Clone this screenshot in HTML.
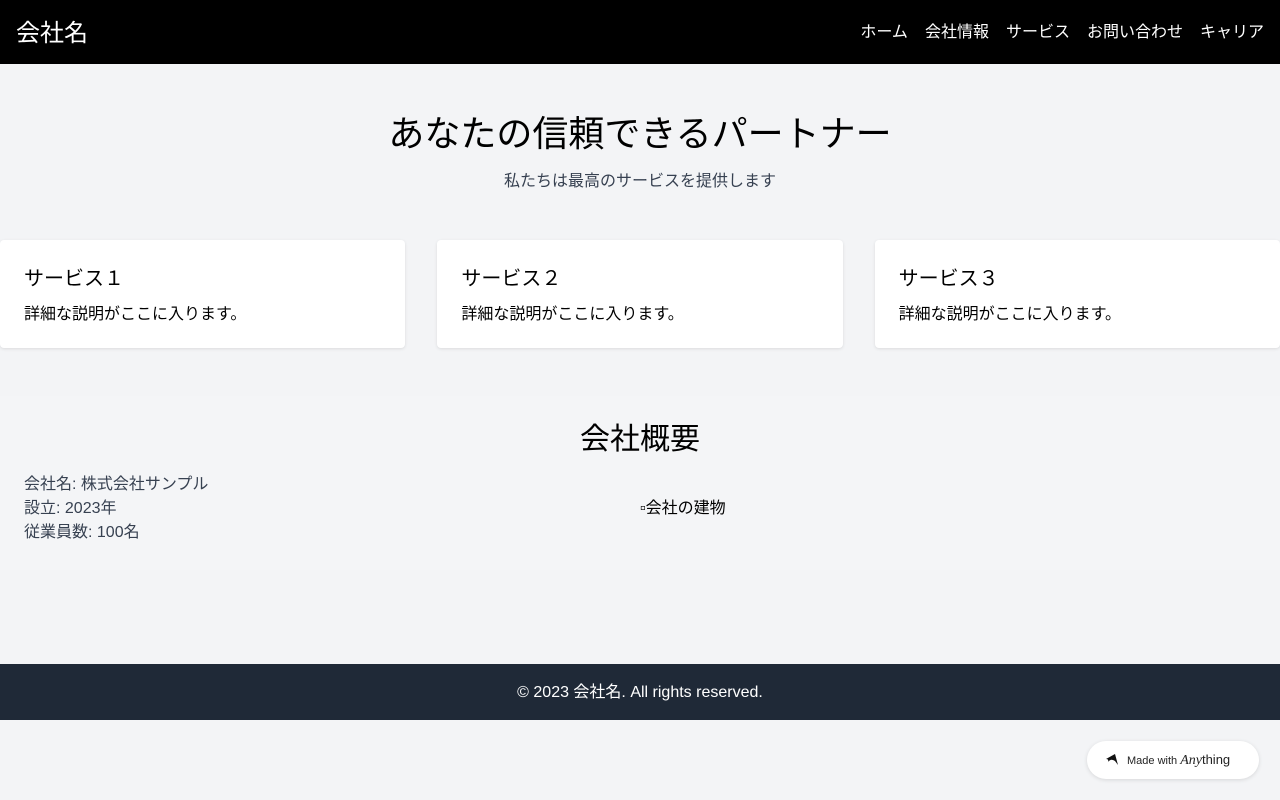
<!DOCTYPE html>
<html><head><meta charset="utf-8"><style>
*{box-sizing:border-box;margin:0;padding:0}
body{width:1280px;height:800px;background:#f3f4f6;font-family:"Liberation Sans","Noto Sans CJK JP",sans-serif;color:#000;position:relative;overflow:hidden}
header{height:64px;background:#000;color:#fff;display:flex;align-items:center;justify-content:space-between;padding:0 16px 4px}
header .logo{font-size:24px}
header nav{display:flex;gap:17px;font-size:16px}
.hero{text-align:center;height:240px;position:absolute;top:0;left:0;right:0}
.hero h1{font-size:36px;font-weight:400;line-height:48px;position:absolute;top:110px;width:100%}
.hero p{font-size:16px;color:#374151;position:absolute;top:167px;width:100%}
.cards{position:absolute;top:240px;left:0;right:0;display:grid;grid-template-columns:repeat(3,1fr);gap:32px}
.card{background:#fff;border-radius:4px;height:108px;padding:24px;box-shadow:0 1px 3px rgba(0,0,0,.1)}
.card h3{font-size:20px;font-weight:400;line-height:28px;margin-bottom:12px;margin-top:1px}
.card p{font-size:16px;line-height:20px}
.about{position:absolute;top:396px;left:0;right:0;height:174px;background:#f4f5f7;padding:26px 24px}
.about h2{font-size:30px;font-weight:400;text-align:center;line-height:36px}
.about .txt{position:absolute;top:77px;left:24px;color:#374151;font-size:16px;line-height:24px}
.about .img{position:absolute;top:101px;left:640px;font-size:16px;line-height:24px}
footer{position:absolute;top:664px;left:0;right:0;height:56px;background:#1f2937;color:#fff;text-align:center;line-height:58px;font-size:16px}
.badge{position:absolute;left:1087px;top:741px;width:172px;height:38px;background:#fff;border-radius:19px;box-shadow:0 1px 4px rgba(0,0,0,.12);display:flex;align-items:center;padding-left:18px;font-size:11px;color:#222;gap:8px}
</style></head><body>
<header><div class="logo">会社名</div><nav><span>ホーム</span><span>会社情報</span><span>サービス</span><span>お問い合わせ</span><span>キャリア</span></nav></header>
<div class="hero"><h1>あなたの信頼できるパートナー</h1><p>私たちは最高のサービスを提供します</p></div>
<div class="cards">
<div class="card"><h3>サービス１</h3><p>詳細な説明がここに入ります。</p></div>
<div class="card"><h3>サービス２</h3><p>詳細な説明がここに入ります。</p></div>
<div class="card"><h3>サービス３</h3><p>詳細な説明がここに入ります。</p></div>
</div>
<div class="about"><h2>会社概要</h2><div class="txt">会社名: 株式会社サンプル<br>設立: 2023年<br>従業員数: 100名</div><div class="img">▫会社の建物</div></div>
<footer>© 2023 会社名. All rights reserved.</footer>
<div class="badge"><svg width="14" height="12" viewBox="0 0 14 12"><path d="M1 5 L10 0 L13 11 L10 7 Q6 4 3 8 Q4 5 1 5Z" fill="#111"/></svg><span>Made with <i style="font-family:'Liberation Serif',serif;font-size:14px">Any</i><span style="font-size:13px">thing</span></span></div>
</body></html>
